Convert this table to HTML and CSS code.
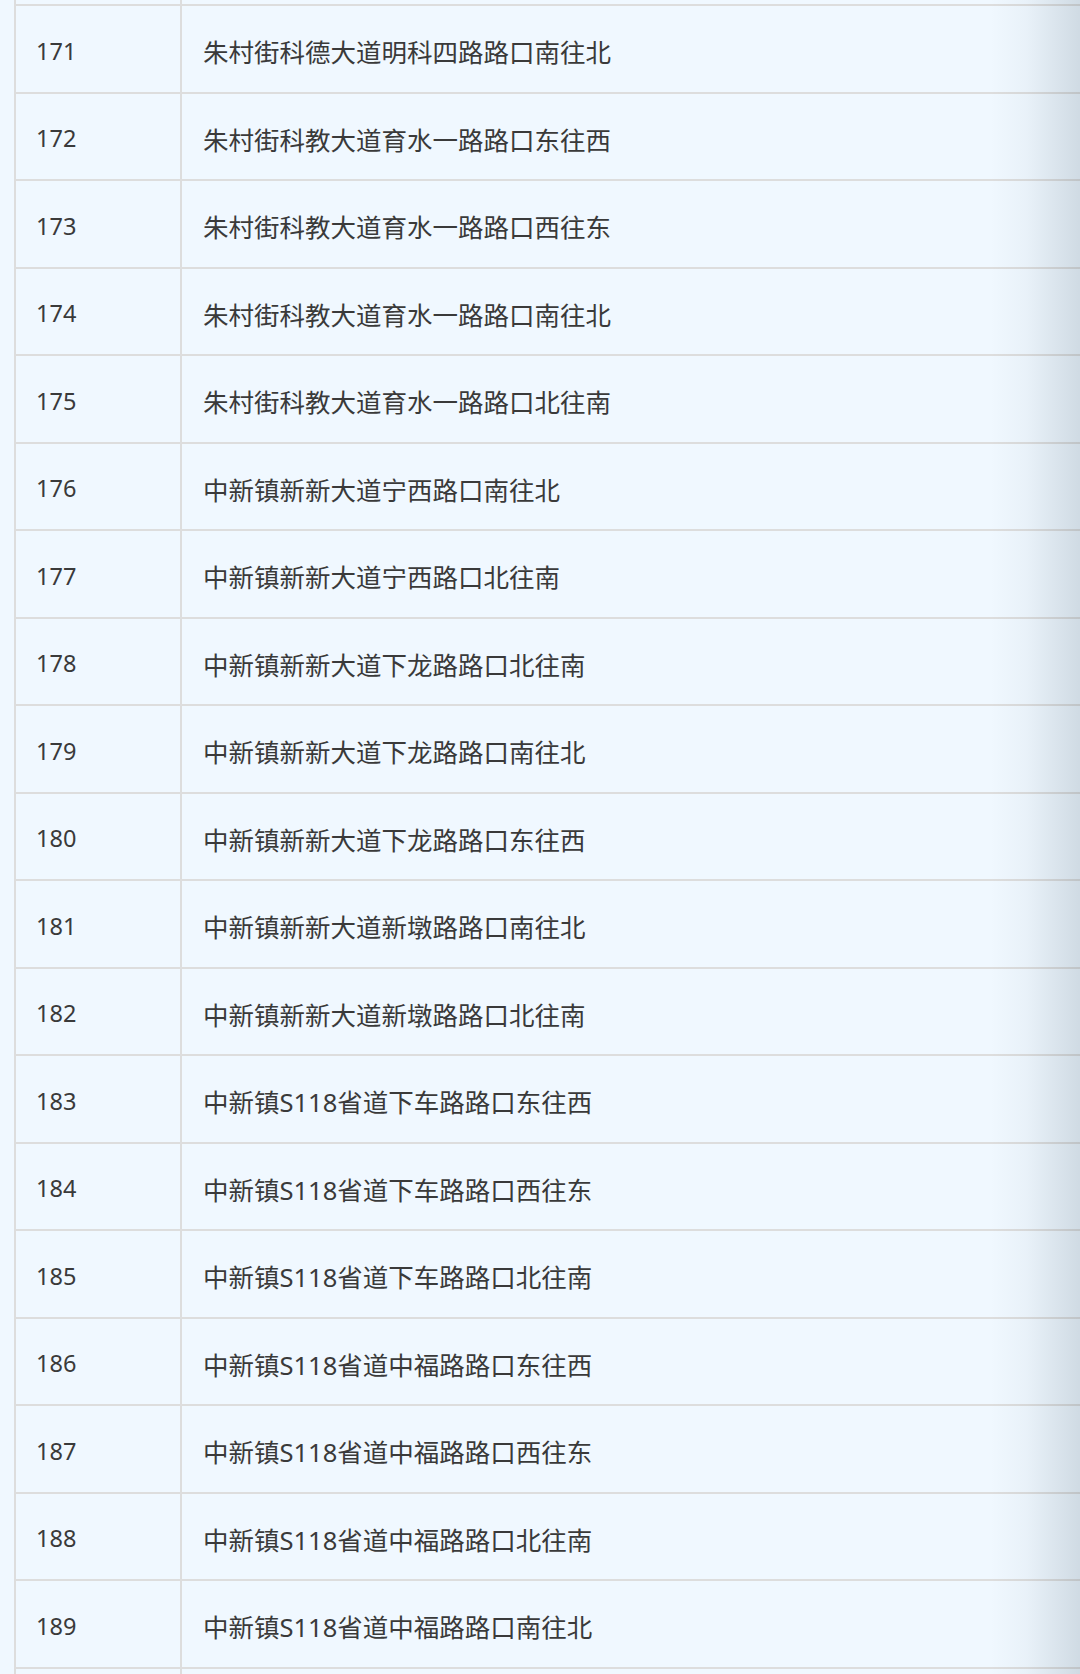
FILE: index.html
```html
<!DOCTYPE html>
<html lang="zh-CN">
<head>
<meta charset="utf-8">
<link rel="stylesheet" href="styles.css">
</head>
<body>
<div class="page">
  <div class="table">
    <div class="row stub"><div class="cell num"></div><div class="cell name"></div></div>
    <div class="row"><div class="cell num">171</div><div class="cell name">朱村街科德大道明科四路路口南往北</div></div>
    <div class="row"><div class="cell num">172</div><div class="cell name">朱村街科教大道育水一路路口东往西</div></div>
    <div class="row"><div class="cell num">173</div><div class="cell name">朱村街科教大道育水一路路口西往东</div></div>
    <div class="row"><div class="cell num">174</div><div class="cell name">朱村街科教大道育水一路路口南往北</div></div>
    <div class="row"><div class="cell num">175</div><div class="cell name">朱村街科教大道育水一路路口北往南</div></div>
    <div class="row"><div class="cell num">176</div><div class="cell name">中新镇新新大道宁西路口南往北</div></div>
    <div class="row"><div class="cell num">177</div><div class="cell name">中新镇新新大道宁西路口北往南</div></div>
    <div class="row"><div class="cell num">178</div><div class="cell name">中新镇新新大道下龙路路口北往南</div></div>
    <div class="row"><div class="cell num">179</div><div class="cell name">中新镇新新大道下龙路路口南往北</div></div>
    <div class="row"><div class="cell num">180</div><div class="cell name">中新镇新新大道下龙路路口东往西</div></div>
    <div class="row"><div class="cell num">181</div><div class="cell name">中新镇新新大道新墩路路口南往北</div></div>
    <div class="row"><div class="cell num">182</div><div class="cell name">中新镇新新大道新墩路路口北往南</div></div>
    <div class="row"><div class="cell num">183</div><div class="cell name">中新镇S118省道下车路路口东往西</div></div>
    <div class="row"><div class="cell num">184</div><div class="cell name">中新镇S118省道下车路路口西往东</div></div>
    <div class="row"><div class="cell num">185</div><div class="cell name">中新镇S118省道下车路路口北往南</div></div>
    <div class="row"><div class="cell num">186</div><div class="cell name">中新镇S118省道中福路路口东往西</div></div>
    <div class="row"><div class="cell num">187</div><div class="cell name">中新镇S118省道中福路路口西往东</div></div>
    <div class="row"><div class="cell num">188</div><div class="cell name">中新镇S118省道中福路路口北往南</div></div>
    <div class="row"><div class="cell num">189</div><div class="cell name">中新镇S118省道中福路路口南往北</div></div>
    <div class="row"><div class="cell num"></div><div class="cell name"></div></div>
  </div>
  <div class="edge-shadow"></div>
</div>
</body>
</html>
```

FILE: styles.css
```css
html, body {
  margin: 0;
  padding: 0;
  background: #f0f8ff;
}

.page {
  position: relative;
  width: 1080px;
  height: 1674px;
  overflow: hidden;
  padding-left: 14px;
  box-sizing: border-box;
  font-family: "Noto Sans", "Noto Sans CJK SC", sans-serif;
  font-size: 25.5px;
  color: #3a3a3a;
}

.table {
  border-left: 2px solid #dddddd;
}

.row {
  display: flex;
  height: 87.5px;
  box-sizing: border-box;
  border-top: 2px solid #dddddd;
}

.row.stub {
  height: 4px;
  border-top: none;
}

.cell {
  display: flex;
  align-items: center;
  box-sizing: border-box;
  padding-top: 4px;
}

.row.stub .cell {
  padding-top: 0;
}

.num {
  width: 166px;
  flex: none;
  border-right: 2px solid #dddddd;
  padding-left: 20px;
  font-size: 23.5px;
}

.name {
  flex: 1;
  padding-left: 21px;
  white-space: nowrap;
}

.edge-shadow {
  position: absolute;
  top: 0;
  right: 0;
  width: 90px;
  height: 100%;
  background: linear-gradient(to right, rgba(10, 40, 60, 0) 0%, rgba(10, 40, 60, 0.03) 40%, rgba(10, 40, 60, 0.14) 100%);
  pointer-events: none;
}
```
